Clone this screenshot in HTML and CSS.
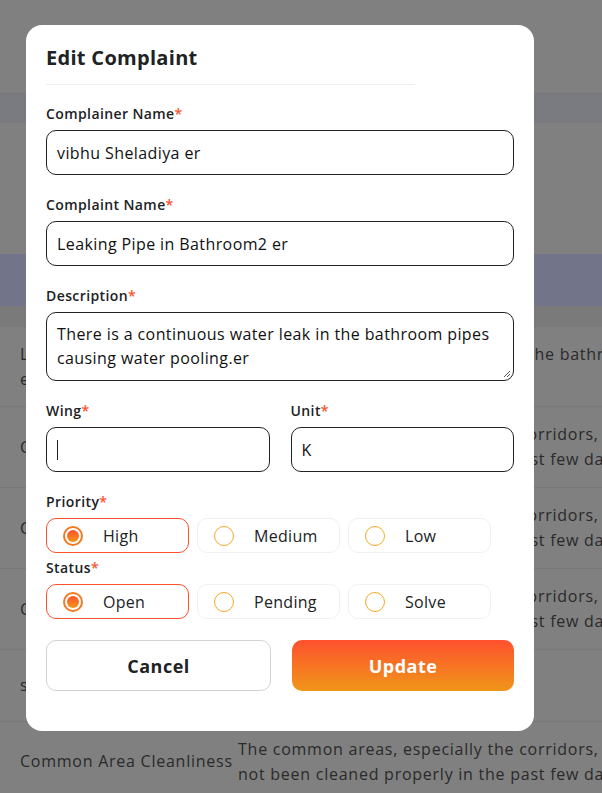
FILE: index.html
```html
<!DOCTYPE html>
<html>
<head>
<meta charset="utf-8">
<link rel="stylesheet" href="styles.css">
</head>
<body>
<div class="page">
  <div class="topbar"></div>
  <div class="subbar"></div>
  <div class="spacer"></div>
  <div class="thead"></div>
  <div class="tgap"></div>
  <div class="row r1">
    <div class="c1 tight">Leaking Pipe in Bathroom2 er</div>
    <div class="c2">There is a continuous water leak in the bathroom pipes causing water pooling.er</div>
  </div>
  <div class="row r2">
    <div class="c1">Common Area Cleanliness</div>
    <div class="c2">The common areas, especially the corridors, have not been cleaned properly in the past few days.</div>
  </div>
  <div class="row r2">
    <div class="c1">Common Area Cleanliness</div>
    <div class="c2">The common areas, especially the corridors, have not been cleaned properly in the past few days.</div>
  </div>
  <div class="row r2">
    <div class="c1">Common Area Cleanliness</div>
    <div class="c2">The common areas, especially the corridors, have not been cleaned properly in the past few days.</div>
  </div>
  <div class="row r5">
    <div class="c1">sdfsdf</div>
    <div class="c2"></div>
  </div>
  <div class="row r6">
    <div class="c1">Common Area Cleanliness</div>
    <div class="c2">The common areas, especially the corridors, have not been cleaned properly in the past few days.</div>
  </div>
</div>

<div class="modal">
  <h2 class="title">Edit Complaint</h2>
  <div class="divider"></div>

  <div class="field">
    <label class="label">Complainer Name<span class="req">*</span></label>
    <div class="input">vibhu Sheladiya er</div>
  </div>
  <div class="field">
    <label class="label">Complaint Name<span class="req">*</span></label>
    <div class="input">Leaking Pipe in Bathroom2 er</div>
  </div>
  <div class="field">
    <label class="label">Description<span class="req">*</span></label>
    <div class="input textarea">There is a continuous water leak in the bathroom pipes causing water pooling.er
      <svg class="grip" width="10" height="10" viewBox="0 0 10 10"><path d="M9 3 L3 9 M9 6 L6 9" stroke="#555" stroke-width="1" fill="none"/></svg>
    </div>
  </div>
  <div class="field two">
    <div class="col">
      <label class="label">Wing<span class="req">*</span></label>
      <div class="input"><span class="caret"></span></div>
    </div>
    <div class="col">
      <label class="label">Unit<span class="req">*</span></label>
      <div class="input">K</div>
    </div>
  </div>

  <div class="field radios">
    <label class="label">Priority<span class="req">*</span></label>
    <div class="opts">
      <div class="opt on"><span class="dot"></span>High</div>
      <div class="opt"><span class="dot"></span>Medium</div>
      <div class="opt"><span class="dot"></span>Low</div>
    </div>
  </div>
  <div class="field radios status">
    <label class="label">Status<span class="req">*</span></label>
    <div class="opts">
      <div class="opt on"><span class="dot"></span>Open</div>
      <div class="opt"><span class="dot"></span>Pending</div>
      <div class="opt"><span class="dot"></span>Solve</div>
    </div>
  </div>

  <div class="actions">
    <button class="btn cancel">Cancel</button>
    <button class="btn update">Update</button>
  </div>
</div>
</body>
</html>
```
FILE: styles.css
```css
* { box-sizing: border-box; }
html, body { margin: 0; padding: 0; }
body {
  width: 602px;
  height: 793px;
  overflow: hidden;
  position: relative;
  font-family: "Open Sans", "Liberation Sans", sans-serif;
  background: #808080;
}
.page { width: 602px; overflow: hidden; }
.topbar { height: 93px; background: #808080; }
.subbar { height: 30px; background: #797b80; border-top: 1px solid #74767b; }
.spacer { height: 131px; background: #808080; }
.thead { height: 52px; background: #72758a; }
.tgap { height: 21px; background: #7a7a7a; }
.row {
  display: flex;
  align-items: center;
  border-bottom: 1px solid #787878;
  color: #2a2a2a;
  font-size: 16px;
  letter-spacing: 0.75px;
  line-height: 25px;
}
.r1 { height: 80px; }
.r2 { height: 81px; }
.r5 { height: 72px; }
.r6 { height: 80px; }
.row .c1 { width: 238px; padding-left: 20px; padding-right: 0; flex: none; }
.row .c1.tight { letter-spacing: 0.2px; }
.row .c2 { width: 430px; flex: none; }

.modal {
  position: absolute;
  left: 26px;
  top: 25px;
  width: 508px;
  height: 706px;
  background: #fff;
  border-radius: 16px;
  padding: 18px 20px 0 20px;
  color: #202224;
}
.title {
  margin: 0;
  font-size: 20px;
  line-height: 30px;
  font-weight: 700;
  letter-spacing: 0.3px;
}
.divider {
  margin-top: 11px;
  width: 369px;
  height: 1px;
  background: #efefef;
}
.field { margin-top: 19px; }
.field + .field { margin-top: 20px; }
.label {
  display: block;
  font-size: 14px;
  line-height: 20px;
  font-weight: 600;
  letter-spacing: 0.4px;
  margin-bottom: 6px;
}
.req { color: #fe512e; }
.input {
  height: 45px;
  border: 1px solid #202224;
  border-radius: 10px;
  padding: 0 10px;
  display: flex;
  align-items: center;
  font-size: 16px;
  letter-spacing: 0.4px;
  color: #111;
}
.textarea {
  height: 69px;
  display: block;
  position: relative;
  padding-top: 9px;
  line-height: 24px;
}
.grip { position: absolute; right: 2px; bottom: 2px; }
.caret { width: 1px; height: 20px; background: #202224; }
.two { display: flex; gap: 21px; }
.two .col { flex: 1; }
.radios .label { margin-bottom: 6px; }
.field.status { margin-top: 5px; }
.opts { display: flex; gap: 8px; }
.opt {
  width: 143px;
  height: 35px;
  border: 1px solid #f1f1f1;
  border-radius: 10px;
  display: flex;
  align-items: center;
  padding-left: 16px;
  font-size: 16px;
  letter-spacing: 0.3px;
  gap: 20px;
}
.opt.on { border-color: #fe512e; }
.dot {
  width: 20px;
  height: 20px;
  border-radius: 50%;
  border: 1.5px solid #f9a825;
  flex: none;
}
.opt.on .dot {
  border: 2px solid #f37a22;
  padding: 2px;
  background: linear-gradient(#fe512e, #f09619) content-box;
}
.actions {
  display: flex;
  gap: 21px;
  margin-top: 21px;
}
.btn {
  height: 51px;
  border-radius: 10px;
  font-family: inherit;
  font-size: 18px;
  font-weight: 700;
  letter-spacing: 0.5px;
  cursor: pointer;
}
.cancel {
  width: 225px;
  background: #fff;
  border: 1px solid #d3d3d3;
  color: #202224;
}
.update {
  width: 222px;
  border: none;
  color: #fff;
  background: linear-gradient(180deg, #fe512e, #f09619);
}
```
